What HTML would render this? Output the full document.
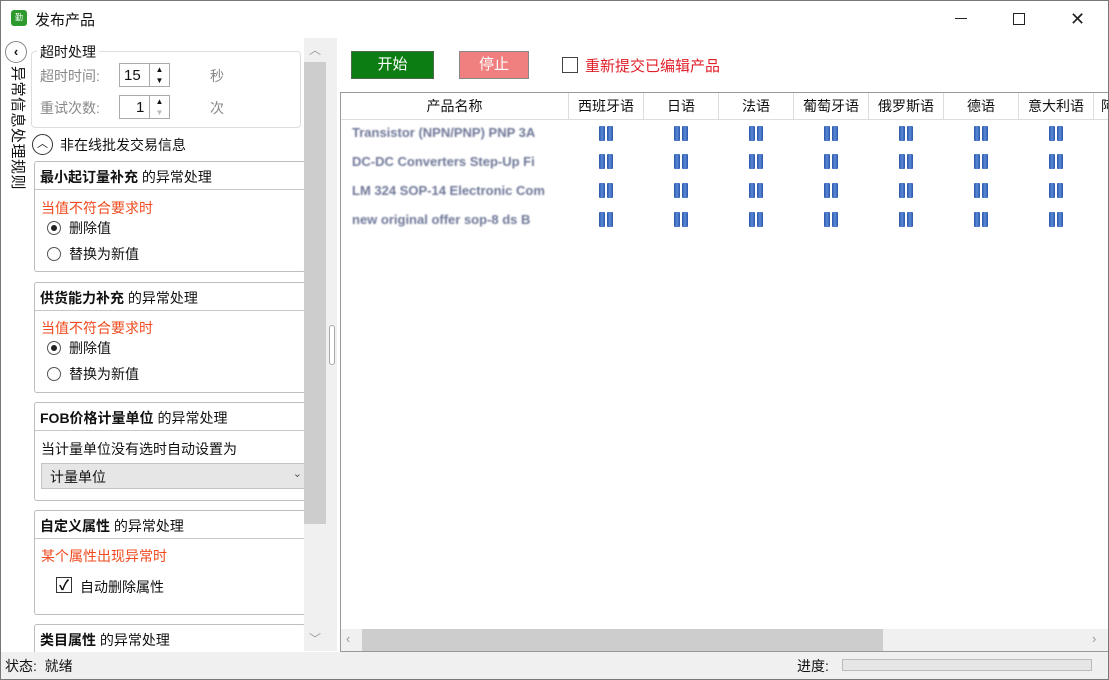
<!DOCTYPE html>
<html><head><meta charset="utf-8"><style>
*{margin:0;padding:0;box-sizing:border-box}
body{width:1109px;height:680px;overflow:hidden;background:#fff;font-family:"Liberation Sans","Noto Sans CJK SC",sans-serif;font-size:14px;color:#111;position:relative}
.a{position:absolute}
.box{position:absolute;left:34px;width:272px;border:1px solid #bdbdbd;border-right:none;border-radius:3px;background:#fff}
.hd{height:28px;border-bottom:1px solid #c8c8c8;padding:5px 0 0 5px;font-size:14px}
.hd b{font-weight:bold}
.red{color:#f04a1e;font-size:14px}
.rad{position:absolute;width:14px;height:14px;border:1px solid #555;border-radius:50%;background:#fff}
.rad.on::after{content:"";position:absolute;left:3px;top:3px;width:6px;height:6px;border-radius:50%;background:#222}
.col{position:absolute;top:93px;height:27px;border-right:1px solid #ddd;text-align:center;line-height:27px;font-size:14px}
.ic{position:absolute;width:15px;height:15px}
.ic::before,.ic::after{content:"";position:absolute;top:0;width:6px;height:15px;background:linear-gradient(90deg,#2a56a8,#5b8ad8,#2a56a8);border-radius:1px}
.ic::before{left:0}.ic::after{left:8px}
.bl{position:absolute;left:352px;color:#6f7898;filter:blur(0.9px);font-size:13px;font-weight:bold;white-space:nowrap;width:212px;overflow:hidden}
</style></head><body>
<div class="a" style="left:0;top:0;width:1109px;height:680px;border:1px solid #777;pointer-events:none;z-index:9"></div>
<div class="a" style="left:11px;top:10px;width:16px;height:16px;background:#2e9a2e;border-radius:3px;color:#fff;font-size:8px;text-align:center;line-height:16px">勤</div>
<div class="a" style="left:35px;top:9px;font-size:15px">发布产品</div>
<div class="a" style="left:955px;top:18px;width:12px;height:1px;background:#222"></div>
<div class="a" style="left:1013px;top:13px;width:12px;height:12px;border:1px solid #222"></div>
<div class="a" style="left:1070px;top:10px;font-size:18px;line-height:18px;color:#222">✕</div>
<div class="a" style="left:5px;top:41px;width:22px;height:22px;border:1px solid #888;border-radius:50%;text-align:center;line-height:19px;font-size:13px;font-weight:bold">&lsaquo;</div>
<div class="a" style="left:8px;top:66px;width:18px;font-size:15px;line-height:17px;writing-mode:vertical-rl;text-orientation:sideways;letter-spacing:0.5px">异常信息处理规则</div>
<div class="a" style="left:31px;top:51px;width:270px;height:77px;border:1px solid #ddd;border-radius:4px"></div>
<div class="a" style="left:37px;top:42px;background:#fff;padding:0 3px;font-size:14px">超时处理</div>
<div class="a" style="left:40px;top:66px;color:#888">超时时间:</div>
<div class="a" style="left:119px;top:63px;width:51px;height:24px;border:1px solid #aaa;padding:3px 0 0 4px;font-size:15px">15</div>
<div class="a" style="left:149px;top:64px;width:20px;height:22px;font-size:8px;line-height:11px;text-align:center;border-left:1px solid #aaa">▲<br>▼</div>
<div class="a" style="left:210px;top:66px;color:#888">秒</div>
<div class="a" style="left:40px;top:98px;color:#888">重试次数:</div>
<div class="a" style="left:119px;top:95px;width:51px;height:24px;border:1px solid #aaa;padding:3px 0 0 16px;font-size:15px">1</div>
<div class="a" style="left:149px;top:96px;width:20px;height:22px;font-size:8px;line-height:11px;text-align:center;border-left:1px solid #aaa">▲<br><span style="color:#bbb">▼</span></div>
<div class="a" style="left:210px;top:98px;color:#888">次</div>
<div class="a" style="left:32px;top:134px;width:21px;height:21px;border:1px solid #333;border-radius:50%;text-align:center;font-size:11px;line-height:19px">︿</div>
<div class="a" style="left:60px;top:135px">非在线批发交易信息</div>
<div class="box" style="top:161px;height:111px"><div class="hd"><b>最小起订量补充</b> 的异常处理</div>
<div class="a red" style="left:6px;top:36px">当值不符合要求时</div>
<div class="rad on" style="left:12px;top:59px"></div><div class="a" style="left:34px;top:56px">删除值</div>
<div class="rad" style="left:12px;top:85px"></div><div class="a" style="left:34px;top:82px">替换为新值</div></div>
<div class="box" style="top:282px;height:111px"><div class="hd"><b>供货能力补充</b> 的异常处理</div>
<div class="a red" style="left:6px;top:35px">当值不符合要求时</div>
<div class="rad on" style="left:12px;top:58px"></div><div class="a" style="left:34px;top:55px">删除值</div>
<div class="rad" style="left:12px;top:84px"></div><div class="a" style="left:34px;top:81px">替换为新值</div></div>
<div class="box" style="top:402px;height:99px"><div class="hd"><b>FOB价格计量单位</b> 的异常处理</div>
<div class="a" style="left:6px;top:36px">当计量单位没有选时自动设置为</div>
<div class="a" style="left:6px;top:60px;width:266px;height:26px;background:#e6e6e6;border:1px solid #c4c4c4;padding:3px 0 0 8px">计量单位<span style="position:absolute;right:4px;top:3px;font-size:11px;color:#555">⌄</span></div></div>
<div class="box" style="top:510px;height:105px"><div class="hd"><b>自定义属性</b> 的异常处理</div>
<div class="a red" style="left:6px;top:35px">某个属性出现异常时</div>
<div class="a" style="left:21px;top:66px;width:16px;height:16px;border:1px solid #333;font-size:14px;line-height:14px;text-align:center;font-weight:bold">✓</div>
<div class="a" style="left:45px;top:66px">自动删除属性</div></div>
<div class="box" style="top:624px;height:40px"><div class="hd"><b>类目属性</b> 的异常处理</div></div>
<div class="a" style="left:304px;top:38px;width:22px;height:613px;background:#f0f0f0"></div>
<div class="a" style="left:304px;top:62px;width:22px;height:462px;background:#cdcdcd"></div>
<div class="a" style="left:309px;top:41px;color:#999;font-size:12px">︿</div>
<div class="a" style="left:309px;top:630px;color:#999;font-size:12px">﹀</div>
<div class="a" style="left:326px;top:38px;width:11px;height:613px;background:#f0f0f0"></div>
<div class="a" style="left:329px;top:325px;width:6px;height:40px;border:1px solid #aaa;border-radius:3px;background:#fff"></div>
<div class="a" style="left:351px;top:51px;width:83px;height:28px;background:#0b7d12;border:1px solid #4a6a4a;color:#fff;text-align:center;line-height:26px;font-size:15px">开始</div>
<div class="a" style="left:459px;top:51px;width:70px;height:28px;background:#f08080;border:1px solid #888;color:#fff;text-align:center;line-height:26px;font-size:15px">停止</div>
<div class="a" style="left:562px;top:57px;width:16px;height:16px;border:1px solid #444"></div>
<div class="a" style="left:585px;top:55px;color:#e0202a;font-size:15px">重新提交已编辑产品</div>
<div class="a" style="left:340px;top:92px;width:769px;height:560px;border:1px solid #999;border-right:none"></div>
<div class="a" style="left:341px;top:93px;width:768px;height:27px;background:#fff;border-bottom:1px solid #ddd"></div>
<div class="col" style="left:341px;width:228px">产品名称</div>
<div class="col" style="left:569px;width:75px">西班牙语</div>
<div class="col" style="left:644px;width:75px">日语</div>
<div class="col" style="left:719px;width:75px">法语</div>
<div class="col" style="left:794px;width:75px">葡萄牙语</div>
<div class="col" style="left:869px;width:75px">俄罗斯语</div>
<div class="col" style="left:944px;width:75px">德语</div>
<div class="col" style="left:1019px;width:75px">意大利语</div>
<div class="col" style="left:1094px;width:30px;text-align:left;padding-left:7px">阿</div>
<div class="bl" style="top:125px">Transistor (NPN/PNP) PNP 3A</div>
<div class="bl" style="top:154px">DC-DC Converters Step-Up Fi</div>
<div class="bl" style="top:183px">LM 324 SOP-14 Electronic Com</div>
<div class="bl" style="top:212px">new original offer sop-8 ds B</div>
<div id="icons"></div>
<script>
var h='';[126,154,183,212].forEach(function(t){for(var i=0;i<7;i++){h+='<div class="ic" style="left:'+(599+75*i)+'px;top:'+t+'px"></div>';}});document.getElementById('icons').innerHTML=h;
</script>
<div class="a" style="left:341px;top:629px;width:768px;height:22px;background:#f0f0f0"></div>
<div class="a" style="left:362px;top:629px;width:521px;height:22px;background:#cdcdcd"></div>
<div class="a" style="left:346px;top:631px;color:#999;font-size:13px">‹</div>
<div class="a" style="left:1092px;top:631px;color:#999;font-size:13px">›</div>
<div class="a" style="left:0;top:652px;width:1109px;height:28px;background:#f0f0f0"></div>
<div class="a" style="left:5px;top:656px;font-size:14px">状态:&nbsp;&nbsp;就绪</div>
<div class="a" style="left:797px;top:656px;font-size:14px">进度:</div>
<div class="a" style="left:842px;top:659px;width:250px;height:12px;border:1px solid #bbb;background:#e6e6e6"></div>
</body></html>
